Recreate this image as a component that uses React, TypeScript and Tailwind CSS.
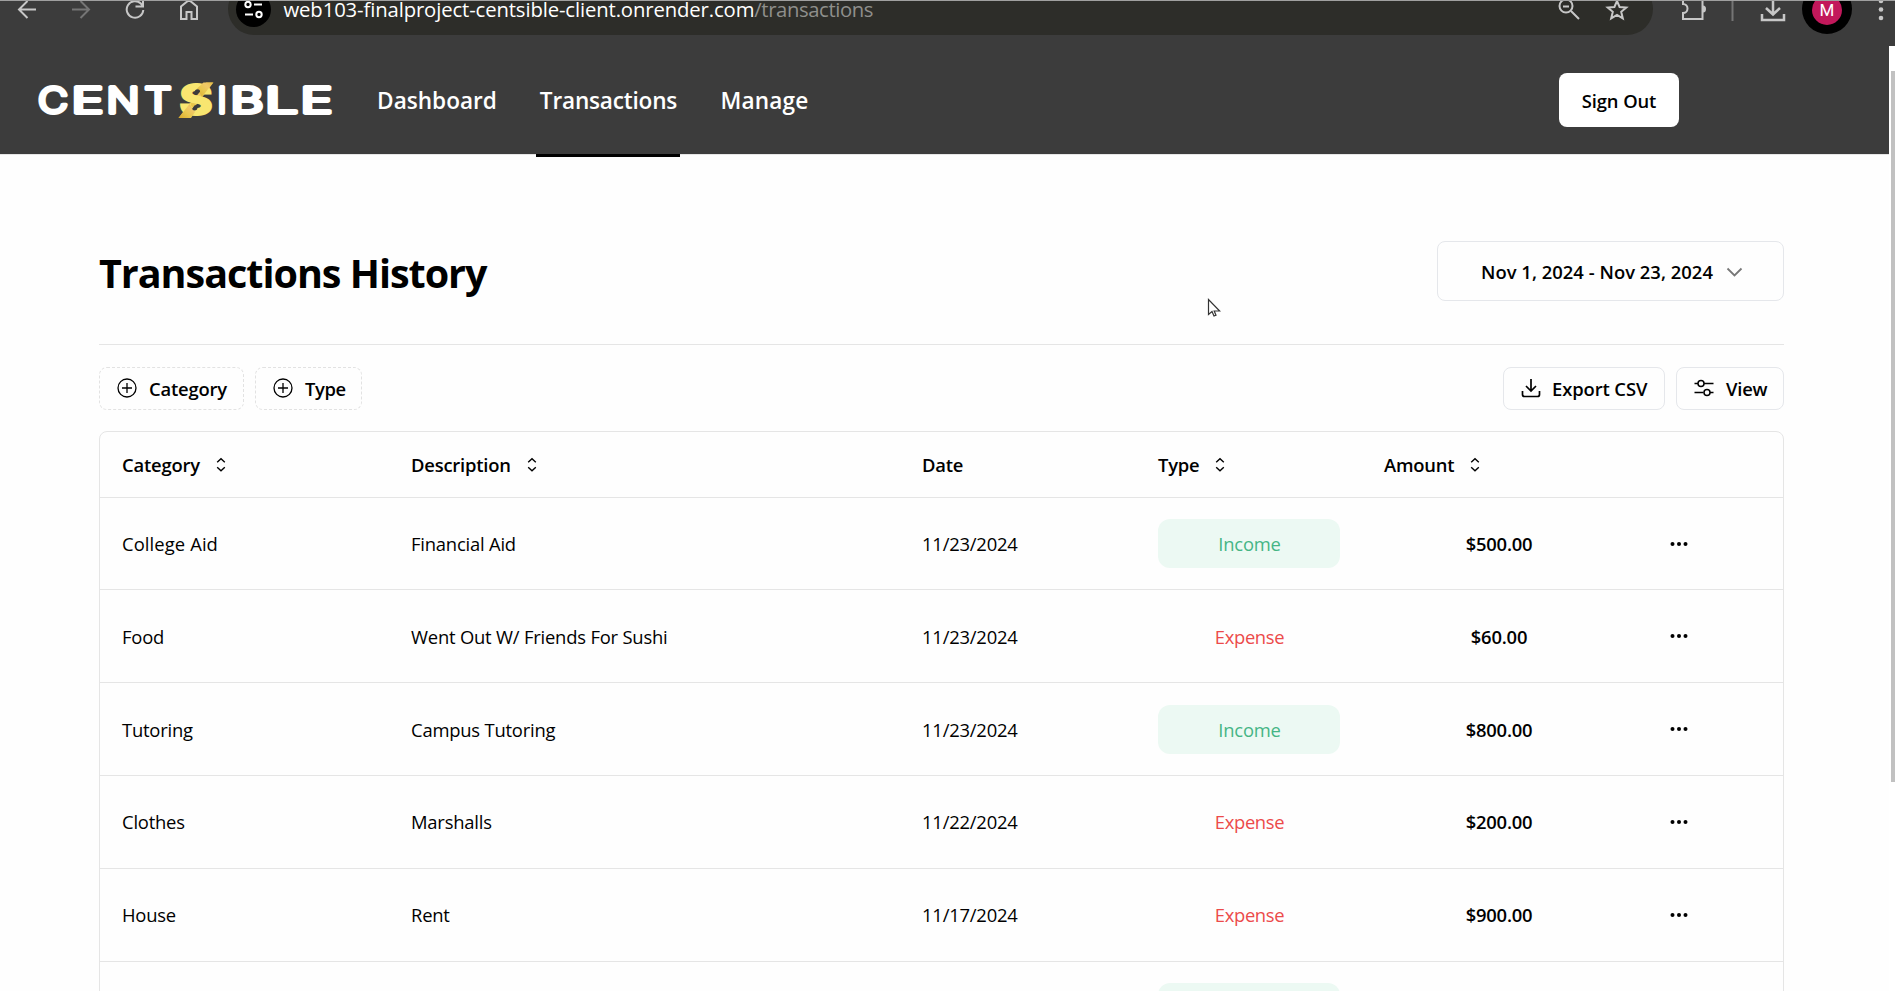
import React from "react";

type Kind = "Income" | "Expense";
interface Row {
  category: string;
  description: string;
  date: string;
  type: Kind;
  amount: string;
}

const rows: Row[] = [
  { category: "College Aid", description: "Financial Aid", date: "11/23/2024", type: "Income", amount: "$500.00" },
  { category: "Food", description: "Went Out W/ Friends For Sushi", date: "11/23/2024", type: "Expense", amount: "$60.00" },
  { category: "Tutoring", description: "Campus Tutoring", date: "11/23/2024", type: "Income", amount: "$800.00" },
  { category: "Clothes", description: "Marshalls", date: "11/22/2024", type: "Expense", amount: "$200.00" },
  { category: "House", description: "Rent", date: "11/17/2024", type: "Expense", amount: "$900.00" },
];

const grid = "grid grid-cols-[289px_511px_236px_226px_232px_1fr] pl-[22px]";

function BrowserBar() {
  return (
    <div className="relative h-[46px] w-full overflow-hidden border-t border-[#a0a0a0] bg-[#3c3c3c]">
      <div className="absolute left-[228px] top-[-18px] h-[52px] w-[1425px] rounded-full bg-[#2d2d29]" />
      <div className="absolute left-[236px] top-[-9px] size-[35px] rounded-full bg-black" />
      <div className="absolute left-[1802px] top-[-17px] size-[50px] rounded-full bg-black" />
      <div className="absolute left-[1812px] top-[-6px] size-[30px] rounded-full bg-[#c2185b]" />
      <div className="absolute left-[1812px] top-0 flex h-[19px] w-[30px] items-center justify-center font-[Roboto] text-[17px] leading-[19px] text-white">
        M
      </div>
      <svg className="absolute left-0 top-[-1px]" width="1895" height="46" fill="none" stroke="#c7c7c7" strokeWidth="2">
        <path d="M36 9.500H19.500M27.500 1L19 9.500l8.500 8.500" />
        <path d="M72 9.500h16.500M80.500 1L89 9.500 80.500 18" stroke="#757575" />
        <path d="M143.300 10a8.300 8.300 0 1 1-2.500-6.500L143 6M143 -1v7.500h-7.500" />
        <path d="M181 6.500V19h5.500v-7h5v7h5.500V6.500L189 0z" />
        <g stroke="#fff" strokeWidth="2">
          <circle cx="248" cy="4.500" r="2.700" />
          <path d="M254 4.500h8M245 14.500h8" />
          <circle cx="259" cy="14.500" r="2.700" />
        </g>
        <circle cx="1566" cy="6" r="6.500" />
        <path d="M1571 11l8 8M1563 6.500h6" />
        <path d="M1617 1l2.600 6 6.700.5-5.100 4.300 1.600 6.500-5.800-3.500-5.800 3.500 1.600-6.500-5.100-4.300 6.700-.5z" />
        <path d="M1683 -1v5a4.500 4.500 0 0 1 0 9v6h19.500V-1" />
        <path d="M1703 5.500a3 3.500 0 0 1 0 7z" fill="#c7c7c7" stroke="none" />
        <path d="M1732.500 -1v22" stroke="#757575" />
        <path d="M1773 -1v14M1766 8l7 6.500 7-6.500M1762 14v6h22v-6" strokeWidth="2.500" />
        <g fill="#c7c7c7" stroke="none">
          <circle cx="1881" cy="1" r="2.300" />
          <circle cx="1881" cy="9.500" r="2.300" />
          <circle cx="1881" cy="18" r="2.300" />
        </g>
      </svg>
      <div className="absolute left-[283.500px] top-0 flex h-[20px] whitespace-nowrap text-[20.300px] leading-[16px] text-white">
        <span className="tracking-[-0.12px]">web103-finalproject-centsible-client.onrender.com</span>
        <span className="tracking-[-0.4px] text-[#8f8f8c]">/transactions</span>
      </div>
    </div>
  );
}

function Logo() {
  const letters: [string, number, number][] = [
    ["C", 38, 30],
    ["E", 71.5, 32],
    ["N", 106.500, 33],
    ["T", 144.5, 27],
    ["I", 217.5, 9],
    ["B", 230.5, 33],
    ["L", 265, 33],
    ["E", 300.5, 32],
  ];
  return (
    <svg className="shrink-0" width="340" height="108" viewBox="0 46 340 108">
      <defs>
        <linearGradient id="gold" x1="0" y1="1" x2="1" y2="0">
          <stop offset="0" stopColor="#d9a92c" />
          <stop offset="0.4" stopColor="#e8c64c" />
          <stop offset="0.7" stopColor="#f0c868" />
          <stop offset="1" stopColor="#e3bb45" />
        </linearGradient>
      </defs>
      <g fontFamily="Inter, sans-serif" fontWeight="300" fontSize="35.500" fill="#fff" stroke="#fff" strokeWidth="3.800" strokeLinejoin="round" strokeLinecap="round">
        {letters.map(([ch, x, w], i) => (
          <text key={i} x={x} y="113" textLength={w} lengthAdjust="spacingAndGlyphs">
            {ch}
          </text>
        ))}
      </g>
      <path d="M178.500 118L206 82.500h7.500L186 118z" fill="url(#gold)" />
      <text x="179.500" y="115.200" fontFamily="Inter, sans-serif" fontWeight="800" fontSize="42" textLength="33" lengthAdjust="spacingAndGlyphs" fill="#f8e670" stroke="#f8e670" strokeWidth="2">
        S
      </text>
      <path d="M197 88.500L203.500 82.500H213L202 97z" fill="url(#gold)" />
      <path d="M178.500 118L189.500 104l5.500 8-4 6z" fill="url(#gold)" />
      <path d="M194.500 92.500q0-3 3-3.300 2.800.1 2.500 2.600l-3 3.400q-2.200-.2-2.500-2.700zM197.500 107.500q0 2.800-3 3-2.300-.2-2.300-2l2.800-3.600q2.300.2 2.500 2.600z" fill="#3c3c3c" />
    </svg>
  );
}

function Header() {
  return (
    <header className="flex h-[109px] items-start border-b border-[#e5e5e5] bg-[#3c3c3c] text-[22.600px] font-semibold text-white">
      <Logo />
      <nav className="flex h-[111px] gap-[35px] pl-[33px]">
        <a className="flex h-[110px] w-[128px] items-center justify-center tracking-[0px]">Dashboard</a>
        <a className="flex h-[111px] w-[144px] items-center justify-center border-b-[3px] border-black pl-px pt-[2px] tracking-[-0.2px]">Transactions</a>
        <a className="flex h-[110px] w-[99px] items-center justify-center tracking-[0.2px]">Manage</a>
      </nav>
      <button className="ml-auto mr-[210px] mt-[27px] flex h-[54px] w-[120px] items-center justify-center rounded-lg bg-white pt-[2px] text-[18.400px] tracking-[-0.1px] text-black">
        Sign Out
      </button>
    </header>
  );
}

function Sorter() {
  return (
    <svg width="20" height="20" viewBox="0 0 20 20" fill="none" stroke="#000" strokeWidth="1.400">
      <path d="M6.200 7.300L10 3.800l3.800 3.500M6.200 12.200l3.800 3.500 3.800-3.500" />
    </svg>
  );
}

function HeadCell({ label, sort }: { label: string; sort?: boolean }) {
  return (
    <div className="flex items-center gap-[11px] font-semibold">
      {label}
      {sort && <Sorter />}
    </div>
  );
}

function PlusCircle() {
  return (
    <svg className="-mt-[2px]" width="20" height="20" viewBox="0 0 20 20" fill="none" stroke="#000" strokeWidth="1.300">
      <circle cx="10" cy="10" r="9" />
      <path d="M10 5v10M5 10h10" />
    </svg>
  );
}

function TypeBadge({ type }: { type: Kind }) {
  return type === "Income" ? (
    <div className="flex h-[49px] w-[182px] items-center justify-center rounded-xl bg-[#ecf9f3] pl-px pt-px text-[#45b585]">Income</div>
  ) : (
    <div className="flex h-[49px] w-[182px] items-center justify-center rounded-xl pl-px text-[#ec4a4a] tracking-[-0.35px]">Expense</div>
  );
}

export default function App() {
  return (
    <div className="h-[991px] w-[1895px] overflow-hidden bg-[#fefefe] font-['Open_Sans',sans-serif] text-[18.400px] text-black">
      <BrowserBar />
      <div className="flex h-[945px]">
        <div className="w-[1889px] shrink-0">
          <Header />
          <main className="ml-[99px] w-[1685px]">
            <div className="flex h-[190px] items-start justify-between border-b border-[#e5e5e5] pt-[86px]">
              <h1 className="text-[39.500px] font-bold leading-[64px] tracking-[-1.02px]">Transactions History</h1>
              <button className="flex h-[60px] w-[347px] items-center rounded-lg border border-[#e5e7eb] pl-[43px] font-semibold">
                <span className="w-[245px] whitespace-nowrap pt-[2px] text-left tracking-[0.03px]">Nov 1, 2024 - Nov 23, 2024</span>
                <svg className="mt-px" width="17" height="10" viewBox="0 0 17 10" fill="none" stroke="#777" strokeWidth="1.800">
                  <path d="M1.500 1.500l7 7 7-7" />
                </svg>
              </button>
            </div>
            <div className="mt-[22px] flex h-[43px] gap-[11px] font-semibold tracking-[-0.2px]">
              <button className="flex w-[145px] items-center gap-[12px] rounded-lg border border-dashed border-[#e2e2e2] pl-[17px]">
                <PlusCircle />
                Category
              </button>
              <button className="flex w-[107px] items-center gap-[12px] rounded-lg border border-dashed border-[#e2e2e2] pl-[17px] tracking-[-0.4px]">
                <PlusCircle />
                Type
              </button>
              <button className="ml-auto flex w-[162px] items-center gap-[11px] whitespace-nowrap rounded-lg border border-[#e5e7eb] pl-[17px] tracking-[-0.1px]">
                <svg className="-mt-[2px] shrink-0" width="20" height="20" viewBox="0 0 20 20" fill="none" stroke="#000" strokeWidth="1.700">
                  <path d="M10 1v11.500M5 8l5 5 5-5M1.500 13v3.500q0 2 2 2h13q2 0 2-2V13" />
                </svg>
                Export CSV
              </button>
              <button className="flex w-[108px] items-center gap-[12px] rounded-lg border border-[#e5e7eb] pl-[17px]">
                <svg className="-mt-[2px]" width="20" height="20" viewBox="0 0 20 20" fill="none" stroke="#000" strokeWidth="1.500">
                  <path d="M.5 5.500h3.500M10 5.500h9.500M.5 14.500h9M16 14.500h3.500" />
                  <circle cx="7" cy="5.500" r="3" />
                  <circle cx="13" cy="14.500" r="3" />
                </svg>
                View
              </button>
            </div>
            <div className="mt-[21px] h-[600px] rounded-t-lg border border-[#e5e5e5] tracking-[-0.2px]">
              <div className={`${grid} h-[66px] border-b border-[#e5e5e5]`}>
                <HeadCell label="Category" sort />
                <HeadCell label="Description" sort />
                <HeadCell label="Date" />
                <HeadCell label="Type" sort />
                <HeadCell label="Amount" sort />
              </div>
              {rows.map((r, i) => (
                <div key={i} className={`${grid} h-[93px] items-center border-b border-[#e5e5e5] nth-2:h-[92px]`}>
                  <div className={i === 0 ? "pt-px tracking-[0.1px]" : i < 3 ? "pt-px" : ""}>{r.category}</div>
                  <div className={i < 3 ? "pt-px" : ""}>{r.description}</div>
                  <div className={i < 3 ? "pt-px" : ""}>{r.date}</div>
                  <div className={i === 1 ? "pt-px" : ""}>
                    <TypeBadge type={r.type} />
                  </div>
                  <div className={i < 3 ? "pr-[2px] pt-px text-center font-semibold" : "pr-[2px] text-center font-semibold"}>{r.amount}</div>
                  <svg className="ml-[53px]" width="20" height="8" viewBox="0 0 20 8">
                    <circle cx="3.500" cy="4" r="2" />
                    <circle cx="10" cy="4" r="2" />
                    <circle cx="16.500" cy="4" r="2" />
                  </svg>
                </div>
              ))}
              <div className={`${grid} pt-[21px]`}>
                <div className="col-start-4 h-[49px] w-[182px] rounded-xl bg-[#ecf9f3]" />
              </div>
            </div>
          </main>
        </div>
        <div className="w-[6px] bg-white pl-[2px] pt-[25px]">
          <div className="h-[711px] w-[4px] bg-[#c1c1c1]" />
        </div>
      </div>
      <svg className="absolute left-[1207px] top-[298px]" width="14" height="22" viewBox="0 0 14 22" fill="#fff" stroke="#333" strokeWidth="1.200">
        <path d="M1.500 1.500v15l3.500-3 2 4.500 2-.8-1.800-4.200h5.500z" />
      </svg>
    </div>
  );
}
